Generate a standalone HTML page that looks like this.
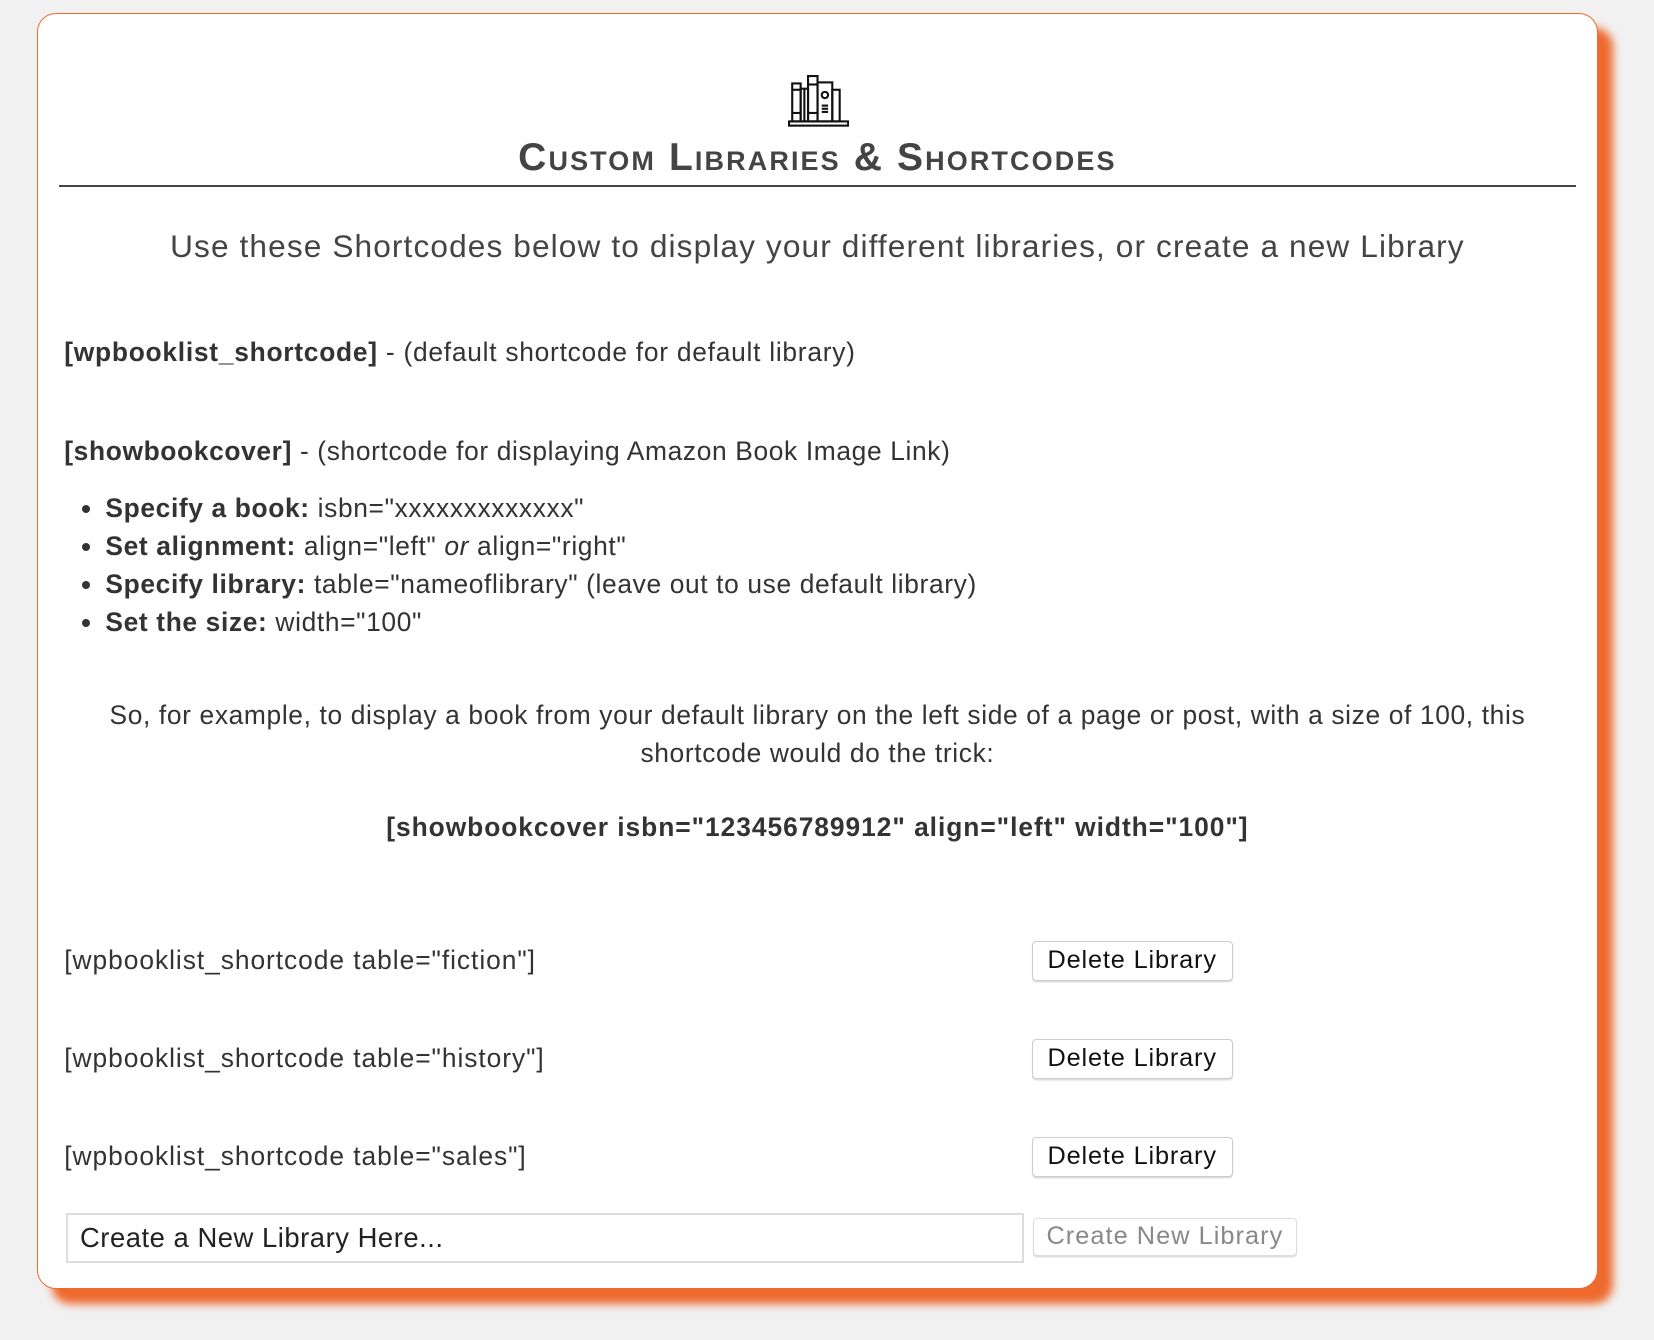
<!DOCTYPE html>
<html><head><meta charset="utf-8"><style>
html,body{margin:0;padding:0;background:#f1f1f1;width:1654px;height:1340px;overflow:hidden}
#w{zoom:1.0548;width:1568px;height:1270px;position:relative;font-family:"Liberation Sans",sans-serif;color:#333}
.card{position:absolute;left:35px;top:12px;width:1478px;height:1208px;background:#fff;border:1px solid #ee6a2f;border-radius:18px;box-shadow:14px 14px 8px #ee6a2f}
.a{position:absolute;white-space:nowrap}
.c{left:0;right:0;text-align:center}
.title{top:116px;font-size:37px;font-weight:bold;font-variant:small-caps;letter-spacing:2px;color:#444}
.line{position:absolute;left:20px;right:20px;top:162px;border-top:2px solid #444}
.t{font-size:25px;letter-spacing:0.6px;color:#333}
ul{position:absolute;left:26px;top:452px;margin:0;padding-left:38px;font-size:25px;letter-spacing:0.6px;line-height:36px}
.btn{position:absolute;left:942px;width:189px;height:36px;border:1px solid #ccc;border-radius:4px;background:#fff;font-size:24px;letter-spacing:0.8px;text-align:center;line-height:36px;color:#111;box-shadow:0 1px 1px #ddd}
</style></head><body><div id="w">
<div class="card">
<svg style="position:absolute;left:711px;top:58px" width="58" height="50" viewBox="0 0 58 50" fill="none" stroke="#111" stroke-width="2">
<rect x="1" y="44" width="56" height="4"/>
<rect x="4" y="8" width="8" height="36"/><line x1="4" y1="14" x2="12" y2="14"/><line x1="4" y1="36" x2="12" y2="36"/>
<rect x="12" y="13" width="7" height="31"/><line x1="15.5" y1="13" x2="15.5" y2="44"/>
<rect x="19" y="1" width="9" height="43"/><line x1="19" y1="9" x2="28" y2="9"/><line x1="19" y1="36" x2="28" y2="36"/>
<rect x="28" y="7" width="14" height="37"/><circle cx="35" cy="19" r="3"/><line x1="32" y1="29" x2="38" y2="29"/><line x1="32" y1="32" x2="38" y2="32"/><line x1="32" y1="35" x2="38" y2="35"/>
<rect x="42" y="14" width="7" height="30"/>
</svg>
<div class="a c title">Custom Libraries &amp; Shortcodes</div>
<div class="line"></div>
<div class="a c" style="top:203px;font-size:30px;letter-spacing:1.05px;color:#444">Use these Shortcodes below to display your different libraries, or create a new Library</div>
<div class="a t" style="left:25px;top:307px;letter-spacing:0.7px"><b>[wpbooklist_shortcode]</b> - (default shortcode for default library)</div>
<div class="a t" style="left:25px;top:400px"><b>[showbookcover]</b> - (shortcode for displaying Amazon Book Image Link)</div>
<ul>
<li><b>Specify a book:</b> isbn="xxxxxxxxxxxxx"</li>
<li><b>Set alignment:</b> align="left" <i>or</i> align="right"</li>
<li><b>Specify library:</b> table="nameoflibrary" (leave out to use default library)</li>
<li><b>Set the size:</b> width="100"</li>
</ul>
<div class="a c t" style="top:648px;line-height:36px">So, for example, to display a book from your default library on the left side of a page or post, with a size of 100, this<br>shortcode would do the trick:</div>
<div class="a c t" style="top:757px;letter-spacing:0.9px"><b>[showbookcover isbn="123456789912" align="left" width="100"]</b></div>
<div class="a t" style="left:25px;top:883px;letter-spacing:0.9px">[wpbooklist_shortcode table="fiction"]</div>
<div class="btn" style="top:879px">Delete Library</div>
<div class="a t" style="left:25px;top:976px;letter-spacing:0.9px">[wpbooklist_shortcode table="history"]</div>
<div class="btn" style="top:972px">Delete Library</div>
<div class="a t" style="left:25px;top:1069px;letter-spacing:0.9px">[wpbooklist_shortcode table="sales"]</div>
<div class="btn" style="top:1065px">Delete Library</div>
<div class="a" style="left:27px;top:1137px;width:893px;height:44px;border:2px solid #ddd;font-size:26px;letter-spacing:0.5px;line-height:44px;padding-left:11px;box-sizing:content-box;color:#222">Create a New Library Here...</div>
<div class="btn" style="left:943px;top:1142px;width:249px;height:34px;line-height:34px;color:#888;border-color:#ddd;letter-spacing:1px">Create New Library</div>
</div>
</div></body></html>
